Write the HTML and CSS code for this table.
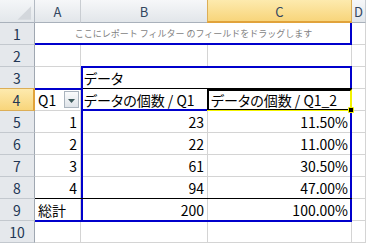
FILE: index.html
```html
<!DOCTYPE html>
<html lang="ja">
<head>
<meta charset="utf-8">
<link rel="stylesheet" href="styles.css">
</head>
<body>
<div class="wrap">
  <div class="sheet">
    <div class="corner"><svg width="35" height="23" viewBox="0 0 35 23"><polygon points="18,20 32,20 32,6" fill="#d3d7dc"/></svg></div>
    <div class="ch">A</div>
    <div class="ch">B</div>
    <div class="ch sel">C</div>
    <div class="ch">D</div>

    <div class="rh">1</div>
    <div class="cell filter span3">ここにレポート フィルター のフィールドをドラッグします</div>
    <div class="cell"></div>

    <div class="rh">2</div>
    <div class="cell"></div><div class="cell"></div><div class="cell"></div><div class="cell"></div>

    <div class="rh">3</div>
    <div class="cell"></div>
    <div class="cell span2">データ</div>
    <div class="cell"></div>

    <div class="rh sel">4</div>
    <div class="cell a4"><span>Q1</span><span class="dd"><svg width="7" height="4" viewBox="0 0 7 4"><polygon points="0,0 7,0 3.5,4" fill="#3d5a5c"/></svg></span></div>
    <div class="cell">データの個数 / Q1</div>
    <div class="cell">データの個数 / Q1_2</div>
    <div class="cell"></div>

    <div class="rh">5</div>
    <div class="cell num">1</div><div class="cell num">23</div><div class="cell num">11.50%</div><div class="cell"></div>
    <div class="rh">6</div>
    <div class="cell num">2</div><div class="cell num">22</div><div class="cell num">11.00%</div><div class="cell"></div>
    <div class="rh">7</div>
    <div class="cell num">3</div><div class="cell num">61</div><div class="cell num">30.50%</div><div class="cell"></div>
    <div class="rh">8</div>
    <div class="cell num">4</div><div class="cell num">94</div><div class="cell num">47.00%</div><div class="cell"></div>
    <div class="rh">9</div>
    <div class="cell">総計</div><div class="cell num">200</div><div class="cell num">100.00%</div><div class="cell"></div>
    <div class="rh">10</div>
    <div class="cell"></div><div class="cell"></div><div class="cell"></div><div class="cell"></div>
  </div>

  <div class="overlay">
    <div class="ov-filter"></div>
    <div class="ov-col"></div>
    <div class="ov-row"></div>
    <div class="ov-data"></div>
    <div class="ov-b4line"></div>
    <div class="ov-totline"></div>
    <div class="ov-sel"><span class="handle"></span></div>
  </div>
</div>
</body>
</html>
```

FILE: styles.css
```css
html, body {
  margin: 0;
  padding: 0;
  background: #fff;
}
body {
  width: 366px;
  height: 244px;
  overflow: hidden;
  font-family: "Noto Sans CJK JP", "Noto Sans", sans-serif;
}
.wrap {
  display: grid;
}
.wrap > * {
  grid-area: 1 / 1;
}
.sheet, .overlay {
  display: grid;
  grid-template-columns: 35px 46px 127px 144px 14px;
  grid-template-rows: 23px repeat(10, 22px);
}
.overlay {
  pointer-events: none;
  z-index: 2;
}
.cell {
  box-sizing: border-box;
  border-right: 1px solid #d4d4d4;
  border-bottom: 1px solid #d4d4d4;
  font-size: 14px;
  line-height: 1;
  display: flex;
  align-items: center;
  padding: 0 3px;
  overflow: hidden;
  white-space: nowrap;
  color: #000;
  font-feature-settings: "palt";
}
.num {
  justify-content: flex-end;
}
.span2 { grid-column: span 2; }
.span3 { grid-column: span 3; }
.filter {
  justify-content: center;
  font-size: 9px;
  color: #7f7f7f;
  font-feature-settings: normal;
  border-right: none;
}
.a4 {
  justify-content: space-between;
  padding-right: 1px;
}
.dd {
  box-sizing: border-box;
  width: 15px;
  height: 17px;
  border: 1px solid #aab4be;
  background: linear-gradient(#fafbfc, #dfe4e9);
  display: flex;
  align-items: center;
  justify-content: center;
  padding-top: 2px;
}
.dd svg { display: block; }

.corner, .ch, .rh {
  box-sizing: border-box;
  display: flex;
  align-items: center;
  justify-content: center;
  font-size: 13px;
  line-height: 1;
  color: #33465f;
}
.corner {
  background: linear-gradient(#f4f6f8, #e3e7eb);
  border-right: 1px solid #b3bac3;
  border-bottom: 1px solid #a9b1bb;
}
.corner svg { display: block; }
.ch {
  background: linear-gradient(#f6f7f9, #e2e6ea);
  border-right: 1px solid #c9cdd2;
  border-bottom: 1px solid #a9b1bb;
  padding-top: 1px;
}
.rh {
  background: #e5e8ec;
  border-right: 1px solid #9fa7b1;
  border-bottom: 1px solid #c3c8ce;
  font-size: 14px;
  color: #223654;
}
.ch.sel, .rh.sel {
  background: linear-gradient(#fdeaae, #f8d57b);
}
.ch.sel {
  border-bottom: 2px solid #e1a33b;
  border-right: 1px solid #dcae57;
  border-left: 1px solid #dcae57;
  margin-left: -1px;
}
.rh.sel {
  border-right: 2px solid #e1a33b;
  border-bottom: 1px solid #dcae57;
  border-top: 1px solid #dcae57;
  margin-top: -1px;
}

/* pivot area outlines */
.ov-filter, .ov-col, .ov-row, .ov-data, .ov-b4line, .ov-totline, .ov-sel {
  box-sizing: border-box;
}
.ov-filter {
  grid-row: 2;
  grid-column: 2 / 5;
  border-right: 2px solid #0000cc;
  border-bottom: 2px solid #0000cc;
}
.ov-col {
  grid-row: 4 / 6;
  grid-column: 3 / 5;
  border: 2px solid #0000cc;
  margin-top: -1px;
}
.ov-row {
  grid-row: 5 / 11;
  grid-column: 2;
  border-top: 2px solid #0000cc;
  border-right: 2px solid #0000cc;
  border-bottom: 2px solid #0000cc;
  margin-top: -1px;
  margin-right: -2px;
  margin-bottom: -1px;
}
.ov-data {
  grid-row: 6 / 11;
  grid-column: 3 / 5;
  border-right: 2px solid #0000cc;
  border-bottom: 2px solid #0000cc;
  margin-bottom: -1px;
}
.ov-b4line {
  grid-row: 5;
  grid-column: 3 / 5;
  border-top: 1px solid #000;
  margin-top: -1px;
  margin-left: 2px;
}
.ov-totline {
  grid-row: 10;
  grid-column: 2 / 5;
  border-top: 1px solid #000;
  margin-top: -1px;
}
.ov-sel {
  grid-row: 5;
  grid-column: 4;
  margin-left: -1px;
  margin-bottom: 1px;
  border-left: 2px solid #000;
  border-top: 2px solid #000;
  border-right: 2px solid #f2f200;
  border-bottom: 1px solid #000;
  box-shadow: 0 1px 0 #f2f200;
  position: relative;
}
.handle {
  position: absolute;
  right: -4px;
  bottom: -4px;
  width: 4px;
  height: 4px;
  background: #000;
  border: 1px solid #f2f200;
  border-radius: 1px;
}
```
